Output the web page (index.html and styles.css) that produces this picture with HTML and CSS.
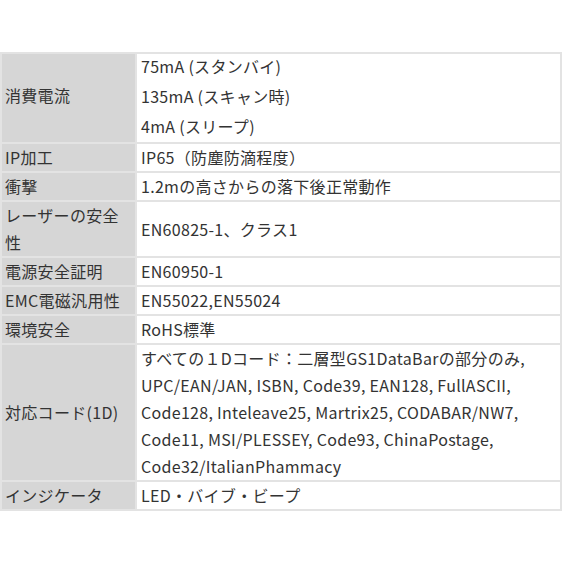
FILE: index.html
```html
<!DOCTYPE html>
<html lang="ja">
<head>
<meta charset="utf-8">
<link rel="stylesheet" href="styles.css">
</head>
<body>
<table class="spec">
  <tr>
    <th class="multi-label">消費電流</th>
    <td class="multi"><div>75mA (スタンバイ)</div><div>135mA (スキャン時)</div><div>4mA (スリープ)</div></td>
  </tr>
  <tr><th>IP加工</th><td>IP65（防塵防滴程度）</td></tr>
  <tr><th>衝撃</th><td>1.2mの高さからの落下後正常動作</td></tr>
  <tr><th>レーザーの安全性</th><td>EN60825-1、クラス1</td></tr>
  <tr><th>電源安全証明</th><td>EN60950-1</td></tr>
  <tr><th>EMC電磁汎用性</th><td>EN55022,EN55024</td></tr>
  <tr><th>環境安全</th><td>RoHS標準</td></tr>
  <tr>
    <th>対応コード(1D)</th>
    <td>すべての１Dコード：二層型GS1DataBarの部分のみ,<br>UPC/EAN/JAN, ISBN, Code39, EAN128, FullASCII,<br>Code128, Inteleave25, Martrix25, CODABAR/NW7,<br>Code11, MSI/PLESSEY, Code93, ChinaPostage,<br>Code32/ItalianPhammacy</td>
  </tr>
  <tr><th>インジケータ</th><td>LED・バイブ・ビープ</td></tr>
</table>
</body>
</html>
```
FILE: styles.css
```css
html, body {
  margin: 0;
  padding: 0;
  background: #ffffff;
}
body {
  font-family: "Noto Sans CJK JP", "Noto Sans", sans-serif;
  font-size: 16px;
  color: #333333;
  padding-top: 52px;
}
.spec {
  border-collapse: collapse;
  width: 562px;
  table-layout: fixed;
}
.spec th,
.spec td {
  border: 2px solid #e3e3e3;
  line-height: 27px;
  padding: 0 4px;
  text-align: left;
  vertical-align: middle;
  font-weight: normal;
  letter-spacing: 0.3px;
}
.spec th {
  width: 126px;
  background: #d6d6d6;
  padding-left: 3px;
}
.spec th.multi-label {
  padding-bottom: 6px;
}
.spec td {
  background: #ffffff;
}
.spec td.multi {
  padding-bottom: 4px;
}
.multi div {
  line-height: 24px;
}
.multi div + div {
  margin-top: 6px;
}
```
